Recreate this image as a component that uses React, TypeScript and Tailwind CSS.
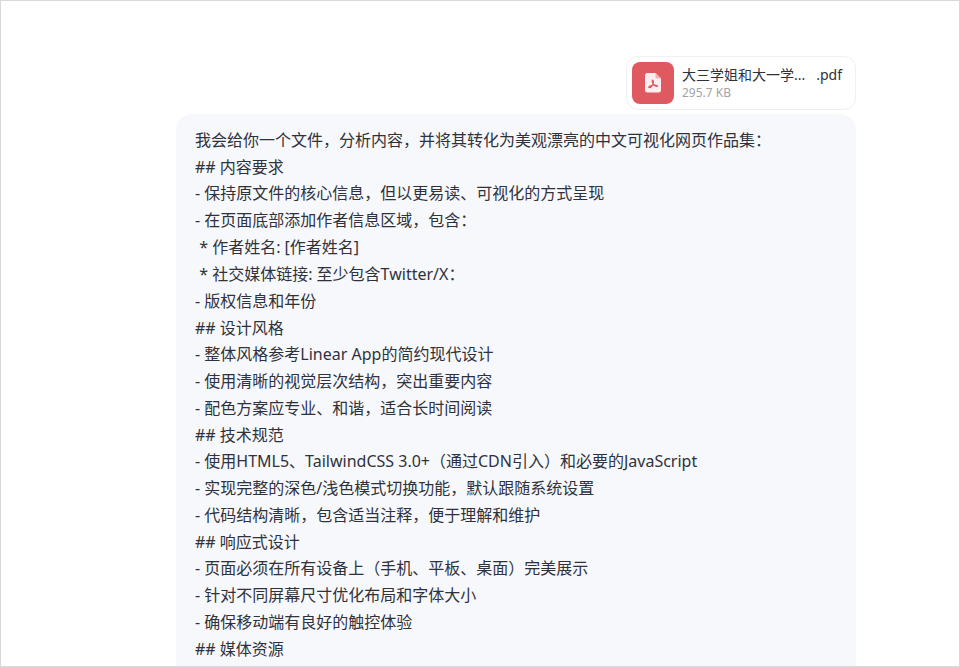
interface PromptLine {
  kind: "heading" | "text";
  text: string;
}

const PROMPT_LINES: PromptLine[] = [
  { kind: "text", text: "我会给你一个文件，分析内容，并将其转化为美观漂亮的中文可视化网页作品集：" },
  { kind: "heading", text: "## 内容要求" },
  { kind: "text", text: "- 保持原文件的核心信息，但以更易读、可视化的方式呈现" },
  { kind: "text", text: "- 在页面底部添加作者信息区域，包含：" },
  { kind: "text", text: " * 作者姓名: [作者姓名]" },
  { kind: "text", text: " * 社交媒体链接: 至少包含Twitter/X：" },
  { kind: "text", text: "- 版权信息和年份" },
  { kind: "heading", text: "## 设计风格" },
  { kind: "text", text: "- 整体风格参考Linear App的简约现代设计" },
  { kind: "text", text: "- 使用清晰的视觉层次结构，突出重要内容" },
  { kind: "text", text: "- 配色方案应专业、和谐，适合长时间阅读" },
  { kind: "heading", text: "## 技术规范" },
  { kind: "text", text: "- 使用HTML5、TailwindCSS 3.0+（通过CDN引入）和必要的JavaScript" },
  { kind: "text", text: "- 实现完整的深色/浅色模式切换功能，默认跟随系统设置" },
  { kind: "text", text: "- 代码结构清晰，包含适当注释，便于理解和维护" },
  { kind: "heading", text: "## 响应式设计" },
  { kind: "text", text: "- 页面必须在所有设备上（手机、平板、桌面）完美展示" },
  { kind: "text", text: "- 针对不同屏幕尺寸优化布局和字体大小" },
  { kind: "text", text: "- 确保移动端有良好的触控体验" },
  { kind: "heading", text: "## 媒体资源" },
];

function PdfIcon() {
  return (
    <svg viewBox="0 0 16 20" className="h-5 w-4" fill="none" aria-hidden="true">
      <path
        d="M2.5 0H10.5L16 5.5V17A2.5 2.5 0 0 1 13.5 19.5H2.5A2.5 2.5 0 0 1 0 17V2.5A2.5 2.5 0 0 1 2.5 0Z"
        fill="#ffeef0"
      />
      <path d="M10.5 0L16 5.5H12A1.5 1.5 0 0 1 10.5 4Z" fill="#f3b0b4" />
      <path
        d="M7.4 7C8.8 7.4 8.6 9.6 7.8 11.6C6.6 13.6 5 15 3.8 14.6C3.4 13.2 5.4 12.6 7.6 12.2C10 11.8 12.4 11.8 12.6 13C12 14.2 9.8 13.2 8.4 11.4C7.4 9.8 6.8 8 7.4 7Z"
        stroke="#dc5960"
        strokeWidth="1.1"
        strokeLinejoin="round"
      />
    </svg>
  );
}

function FileCard() {
  return (
    <div className="flex w-[230px] items-center gap-2 rounded-xl border border-[#eff0f4] bg-white p-[5px]">
      <div className="flex h-[42px] w-[42px] shrink-0 items-center justify-center rounded-lg bg-[#df5a60]">
        <PdfIcon />
      </div>
      <div className="min-w-0 flex-1">
        <div className="flex justify-between pr-2 text-sm leading-5 text-[#30323b]">
          <span>大三学姐和大一学...</span>
          <span>.pdf</span>
        </div>
        <div className="text-xs leading-4 text-[#a2a3a8]">295.7 KB</div>
      </div>
    </div>
  );
}

export default function App() {
  return (
    <main className="h-screen overflow-hidden border border-[#d9d9d9] bg-white pt-[55px] pr-[103px] pl-[175px] font-['Noto_Sans','Noto_Sans_CJK_SC',sans-serif]">
      <div className="flex flex-col items-end gap-1">
        <FileCard />
        <div className="w-full rounded-2xl bg-[#f6f8fc] px-[19px] pt-[13px] pb-8 text-base text-[#30323b]">
          {PROMPT_LINES.map((line) =>
            line.kind === "heading" ? (
              <p key={line.text} className="leading-[26px] whitespace-pre-wrap">
                {line.text}
              </p>
            ) : (
              <p key={line.text} className="leading-[27px] whitespace-pre-wrap">
                {line.text}
              </p>
            ),
          )}
        </div>
      </div>
    </main>
  );
}
